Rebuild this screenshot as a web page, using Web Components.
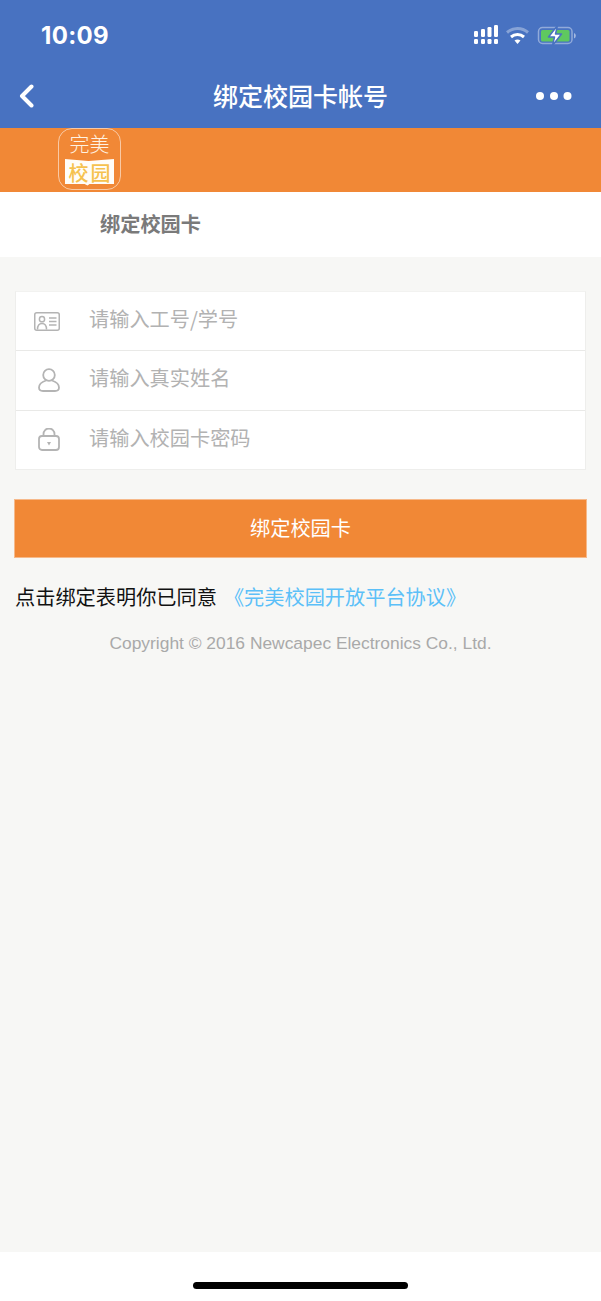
<!DOCTYPE html>
<html lang="zh-CN">
<head>
<meta charset="utf-8">
<title>绑定校园卡帐号</title>
<style>
html,body{margin:0;padding:0;height:100%}
body{width:601px;height:1301px;overflow:hidden;display:flex;flex-direction:column;background:#f7f7f5;font-family:"Noto Sans CJK SC","Liberation Sans",sans-serif}
</style>
</head>
<body>
<app-header>
  <span slot="time">10:09</span>
  <span slot="title">绑定校园卡帐号</span>
</app-header>
<brand-banner></brand-banner>
<section-title>绑定校园卡</section-title>
<form-card>
  <form-row placeholder="请输入工号/学号" icon="card"></form-row>
  <form-row placeholder="请输入真实姓名" icon="user"></form-row>
  <form-row placeholder="请输入校园卡密码" icon="lock"></form-row>
</form-card>
<primary-button>绑定校园卡</primary-button>
<agreement-line link="《完美校园开放平台协议》">点击绑定表明你已同意</agreement-line>
<copy-right>Copyright © 2016 Newcapec Electronics Co., Ltd.</copy-right>
<home-bar></home-bar>
<script>
function def(name, html, init){
  customElements.define(name, class extends HTMLElement{
    constructor(){super();this.attachShadow({mode:'open'}).innerHTML=html;}
    connectedCallback(){ if(init) init(this); }
  });
}
def('app-header',`<style>
:host{display:block;flex:none;height:128px;background:#4872c1;color:#fff;font-family:"Noto Sans CJK SC",sans-serif}
.status{height:72px;display:flex;align-items:flex-start;justify-content:space-between;box-sizing:border-box;padding:22px 25px 0 41px}
.time{font:700 24px/28px Inter,"Liberation Sans",sans-serif;letter-spacing:.3px}
.nav{height:56px;display:flex;align-items:center;justify-content:space-between;padding:0 19px;box-sizing:border-box;position:relative}
.title{position:absolute;left:0;right:0;text-align:center;font-size:25px;font-weight:500;line-height:46px;top:0}
svg{display:block}
</style>
<div class="status"><div class="time"><slot name="time"></slot></div>
<svg width="103" height="22" viewBox="0 0 103 22" style="margin-top:2px">
 <g fill="#fff">
  <rect x="1" y="7" width="4" height="6" rx="1.2"/><rect x="8" y="5" width="4" height="8" rx="1.2"/><rect x="14.500" y="3" width="4" height="10" rx="1.200"/><rect x="21" y="1" width="4" height="12" rx="1.200"/>
  <rect x="1" y="15" width="4" height="5" rx="1.200"/><rect x="8" y="15" width="4" height="5" rx="1.200"/><rect x="14.500" y="15" width="4" height="5" rx="1.200"/><rect x="21" y="15" width="4" height="5" rx="1.200"/>
 </g>
 <path d="M34 8.500a16 16 0 0 1 21 0" fill="none" stroke="#fff" stroke-opacity=".35" stroke-width="3"/>
 <path d="M38 13a10 10 0 0 1 13 0" fill="none" stroke="#fff" stroke-width="3"/>
 <path d="M41.500 16.500a5 5 0 0 1 6 0L44.500 20z" fill="#fff"/>
 <rect x="65.500" y="3.500" width="33.500" height="16" rx="4" fill="none" stroke="#fff" stroke-opacity=".4" stroke-width="1.500"/>
 <path d="M101 9a3 3 0 0 1 0 5.500z" fill="#fff" fill-opacity=".5"/>
 <rect x="68" y="6" width="28.500" height="11.500" rx="1.500" fill="#5fc85f"/>
 <path d="M84.500 1.500L75.500 13h6l-2 8.500 9-11.500h-6z" fill="#fff" stroke="#4872c1" stroke-width="1.500" stroke-linejoin="round"/>
</svg></div>
<div class="nav"><div class="title"><slot name="title"></slot></div>
<svg width="15" height="24" viewBox="0 0 15 24" style="margin-top:-8px"><path d="M12.500 2.500L3 12l9.500 9.500" fill="none" stroke="#fff" stroke-width="4" stroke-linecap="round" stroke-linejoin="round"/></svg>
<svg width="36" height="8" viewBox="0 0 36 8" style="margin:-8px 10px 0 0"><g fill="#fff"><circle cx="4" cy="4" r="4"/><circle cx="18" cy="4" r="4"/><circle cx="31.500" cy="4" r="4"/></g></svg>
</div>`);
def('brand-banner',`<style>
:host{display:block;flex:none;height:64px;background:#f18836;box-sizing:border-box;padding:0 0 2px 58px}
.logo{width:63px;height:62px;box-sizing:border-box;border:1px solid rgba(255,255,255,.55);border-radius:14px;display:flex;flex-direction:column;align-items:center;padding-top:2px;font-family:"Noto Sans CJK SC",sans-serif;font-weight:300}
.top{color:#fff3e2;font-size:20px;line-height:26px;height:28px}
.book{width:49px;height:26.500px;background:#fffdf8;color:#f6c24e;font-size:20px;line-height:28px;letter-spacing:2px;text-indent:2px;text-align:center;font-weight:500;white-space:nowrap;clip-path:polygon(0 0,48% 8%,100% 0,100% 94%,50% 94%,46% 100%,40% 94%,0 94%)}
</style><div class="logo"><div class="top">完美</div><div class="book">校园</div></div>`);
def('section-title',`<style>
:host{display:block;flex:none;height:65px;background:#fff;box-sizing:border-box;padding:2px 0 0 100px;color:#7a7a7a;font-size:20.200px;font-weight:700;line-height:60px;font-family:"Noto Sans CJK SC",sans-serif}
</style><slot></slot>`);
def('form-card',`<style>
:host{display:block;flex:none;margin:34px 15px 0;background:#fff;border:1px solid #eeeeec;border-top-color:#f2f2f0}
::slotted(form-row:not(:last-child)){border-bottom:1px solid #e9e9e7}
</style><slot></slot>`);
const ICONS={
 card:'<svg width="26" height="19" viewBox="0 0 26 19" fill="none" stroke="#b4b4b4" stroke-width="1.500"><rect x=".75" y=".75" width="24.500" height="17.500" rx="2"/><circle cx="8" cy="7.200" r="2.600"/><path d="M3.500 17.500c0-4 2-6 4.500-6s4.500 2 4.500 6M15 6h7.500M15 9.500h7.500M15 13h7.500"/></svg>',
 user:'<svg width="22" height="24" viewBox="0 0 22 24" style="margin-left:3px" fill="none" stroke="#b4b4b4" stroke-width="1.800"><circle cx="11" cy="7" r="5.800"/><path d="M8 12.500C3.500 14 1 16.500 1 19.500 1 21.800 2.500 23 5 23h12c2.500 0 4-1.200 4-3.500 0-3-2.500-5.500-7-7"/></svg>',
 lock:'<svg width="22" height="23" viewBox="0 0 22 23" style="margin-left:3px" fill="none" stroke="#b4b4b4" stroke-width="1.800"><rect x="1" y="8" width="20" height="14" rx="3"/><path d="M5.500 8V6a5.500 5.500 0 0 1 11 0v2"/><path d="M9 14h4l-2 3.500z" fill="#b4b4b4" stroke="none"/></svg>'
};
def('form-row',`<style>
:host{display:block;height:58.300px;box-sizing:content-box}
.row{height:100%;display:flex;align-items:center}
.ic{width:62px;margin-right:11px;flex:none;display:flex;justify-content:center}
.ph{color:#b2b2b2;font-size:20.200px;line-height:26px;font-family:"Noto Sans CJK SC",sans-serif;margin-top:-4px}
svg{display:block}
</style><div class="row"><div class="ic"></div><div class="ph"></div></div>`,el=>{
  el.shadowRoot.querySelector('.ic').innerHTML=ICONS[el.getAttribute('icon')];
  el.shadowRoot.querySelector('.ph').textContent=el.getAttribute('placeholder');
});
def('primary-button',`<style>
:host{display:flex;flex:none;align-items:center;justify-content:center;margin:29px 14px 0;height:59px;box-sizing:border-box;background:#f18836;border:1px solid #f6b98a;color:#fff;font-size:20.200px;font-family:"Noto Sans CJK SC",sans-serif;padding-bottom:2px}
</style><slot></slot>`);
def('agreement-line',`<style>
:host{display:block;flex:none;margin:24px 0 0 15px;color:#111;font-size:20.200px;line-height:30px;font-family:"Noto Sans CJK SC",sans-serif;white-space:nowrap}
a{color:#5cc0f8;text-decoration:none;margin-left:7px}
</style><slot></slot><a></a>`,el=>{el.shadowRoot.querySelector('a').textContent=el.getAttribute('link');});
def('copy-right',`<style>
:host{display:block;flex:none;margin-top:19px;text-align:center;color:#a9a9a9;font:17.400px/24px "Liberation Sans",sans-serif}
</style><slot></slot>`);
def('home-bar',`<style>
:host{display:flex;flex:none;margin-top:auto;height:49px;background:#fff;justify-content:center;box-sizing:border-box;padding-top:30px}
div{width:215px;height:7px;border-radius:4px;background:#000}
</style><div></div>`);
</script>
</body>
</html>
